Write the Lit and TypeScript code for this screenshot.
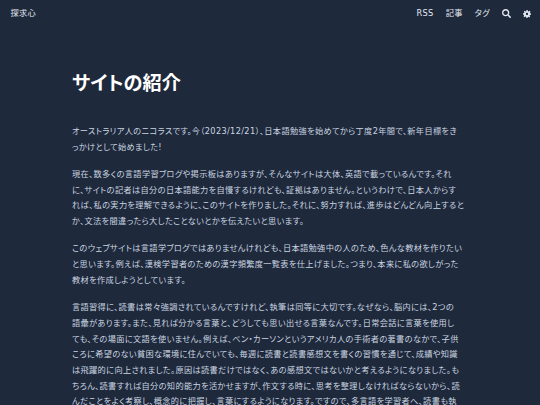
import { LitElement, html, css } from "lit";
import { customElement } from "lit/decorators.js";

const PARAGRAPHS: string[][] = [
  [
    "オーストラリア人のニコラスです。今（2023/12/21）、日本語勉強を始めてから丁度2年間で、新年目標をき",
    "っかけとして始めました!",
  ],
  [
    "現在、数多くの言語学習ブログや掲示板はありますが、そんなサイトは大体、英語で載っているんです。それ",
    "に、サイトの記者は自分の日本語能力を自慢するけれども、証拠はありません。というわけで、日本人からす",
    "れば、私の実力を理解できるように、このサイトを作りました。それに、努力すれば、進歩はどんどん向上すると",
    "か、文法を間違ったら大したことないとかを伝えたいと思います。",
  ],
  [
    "このウェブサイトは言語学ブログではありませんけれども、日本語勉強中の人のため、色んな教材を作りたい",
    "と思います。例えば、漢検学習者のための漢字頻繁度一覧表を仕上げました。つまり、本来に私の欲しがった",
    "教材を作成しようとしています。",
  ],
  [
    "言語習得に、読書は常々強調されているんですけれど、執筆は同等に大切です。なぜなら、脳内には、2つの",
    "語彙があります。また、見れば分かる言葉と、どうしても思い出せる言葉なんです。日常会話に言葉を使用し",
    "ても、その場面に文語を使いません。例えば、ベン・カーソンというアメリカ人の手術者の著書のなかで、子供",
    "ころに希望のない貧困な環境に住んでいても、毎週に読書と読書感想文を書くの習慣を通じて、成績や知識",
    "は飛躍的に向上されました。原因は読書だけではなく、あの感想文ではないかと考えるようになりました。も",
    "ちろん、読書すれば自分の知的能力を活かせますが、作文する時に、思考を整理しなければならないから、読",
    "んだことをよく考察し、概念的に把握し、言葉にするようになります。ですので、多言語を学習者へ、読書も執",
  ],
];

@customElement("app-root")
export class AppRoot extends LitElement {
  static styles = css`
    :host {
      display: block;
      height: 405px;
      overflow: hidden;
      background: #1e293b;
      color: #cbd5e1;
      font-family: "DejaVu Sans", "Noto Sans CJK JP", sans-serif;
      font-feature-settings: "palt";
      font-size: 8.2px;
      letter-spacing: 0.35px;
      line-height: 15.7px;
    }
    header {
      display: flex;
      justify-content: space-between;
      align-items: center;
      height: 28px;
      padding: 0 9px 0 10.5px;
      color: #e2e8f0;
    }
    nav {
      display: flex;
      align-items: center;
      gap: 12px;
    }
    svg { display: block; fill: currentColor; }
    main {
      width: 396px;
      margin: 0 auto;
      padding-top: 42px;
    }
    h1 {
      margin: 0 0 26px;
      font-size: 19.2px;
      letter-spacing: 0;
      line-height: 28px;
      font-weight: 700;
      color: #fff;
    }
    p { margin: 0 0 11.6px; white-space: nowrap; }
    .line { display: block; }
  `;

  render() {
    return html`
      <header>
        <span>探求心</span>
        <nav>
          <span>RSS</span>
          <span>記事</span>
          <span>タグ</span>
          <svg width="9" height="9" viewBox="0 0 512 512"><path d="M505 442.700L405.300 343c-4.500-4.500-10.600-7-17-7H372c27.600-35.300 44-79.700 44-128C416 93.100 322.900 0 208 0S0 93.100 0 208s93.100 208 208 208c48.300 0 92.700-16.400 128-44v16.300c0 6.400 2.500 12.500 7 17l99.700 99.700c9.400 9.400 24.600 9.400 33.900 0l28.300-28.300c9.400-9.400 9.400-24.600.1-34zM208 336c-70.700 0-128-57.200-128-128 0-70.700 57.200-128 128-128 70.700 0 128 57.200 128 128 0 70.700-57.200 128-128 128z"/></svg>
          <svg width="8" height="8" viewBox="0 0 24 24"><path fill-rule="evenodd" d="M10 0h4l.7 3.400 2.400 1 2.900-1.900 2.500 2.500-1.900 2.900 1 2.400L24 10v4l-3.400.7-1 2.400 1.900 2.900-2.500 2.500-2.900-1.900-2.400 1L14 24h-4l-.7-3.400-2.400-1L4 21.500 1.500 19l1.900-2.900-1-2.400L0 14v-4l3.400-.7 1-2.400L2.500 4 5 2.500l2.900 1.900 2.400-1zM12 8.500a3.500 3.500 0 1 0 0 7 3.500 3.500 0 0 0 0-7z"/></svg>
        </nav>
      </header>
      <main>
        <h1>サイトの紹介</h1>
        ${PARAGRAPHS.map(
          (lines) => html`<p>${lines.map((l) => html`<span class="line">${l}</span>`)}</p>`
        )}
      </main>
    `;
  }
}
